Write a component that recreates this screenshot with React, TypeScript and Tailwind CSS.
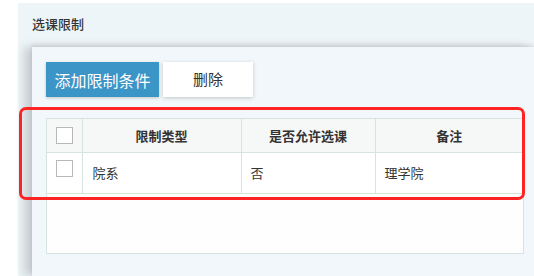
import React from "react";

const rows = [{ type: "院系", allow: "否", note: "理学院" }];

function Box() {
  return <span className="block h-[17px] w-[17px] border-[1.5px] border-[#b8b8b8] bg-white" />;
}

export default function App() {
  return (
    <div
      className="relative h-[276px] w-[534px] overflow-hidden bg-white text-[#333]"
      style={{ fontFamily: '"Noto Sans CJK SC", "Noto Sans", sans-serif' }}
    >
      <div className="ml-[18px] mt-[3px] flex h-[273px] flex-col bg-[#eef5f9]">
        <div className="flex h-[44px] items-center pl-[14px] pb-[2px] text-[13px] font-medium text-[#333]">
          选课限制
        </div>
        <div className="ml-[14px] flex-1 bg-[#f1f7fa] pl-[14px] pt-[15px] shadow-[-8px_0_9px_rgba(0,0,0,0.16),0_-2px_4px_rgba(0,0,0,0.1)]">
          <div className="flex gap-[4px]">
            <button
              type="button"
              className="h-[35px] w-[113px] bg-[#3c95c7] text-[16px] text-white shadow-[0_1px_3px_rgba(0,0,0,0.2)]"
            >
              添加限制条件
            </button>
            <button
              type="button"
              className="h-[35px] w-[90px] bg-white text-[15px] text-[#333] shadow-[0_1px_4px_rgba(0,0,0,0.2)]"
            >
              删除
            </button>
          </div>

          <div className="mt-[21px] h-[136px] w-[478px] border border-[#d6e4df] bg-[#fefefe]">
            <table className="w-full table-fixed border-collapse text-[13px]">
              <colgroup>
                <col className="w-[35px]" />
                <col className="w-[159px]" />
                <col className="w-[134px]" />
                <col />
              </colgroup>
              <thead>
                <tr className="h-[33px] bg-[#f6f8f7]">
                  <th className="border-b border-r border-[#d6e4df] p-0">
                    <div className="flex justify-center">
                      <Box />
                    </div>
                  </th>
                  <th className="border-b border-r border-[#d6e4df] font-bold">限制类型</th>
                  <th className="border-b border-r border-[#d6e4df] font-bold">是否允许选课</th>
                  <th className="border-b border-[#d6e4df] font-bold">备注</th>
                </tr>
              </thead>
              <tbody>
                {rows.map((r) => (
                  <tr key={r.type} className="h-[41px] bg-white">
                    <td className="border-b border-r border-[#d6e4df] p-0 align-top">
                      <div className="flex justify-center pt-[7px]">
                        <Box />
                      </div>
                    </td>
                    <td className="border-b border-r border-[#d6e4df] pl-[10px]">{r.type}</td>
                    <td className="border-b border-r border-[#d6e4df] pl-[9px]">{r.allow}</td>
                    <td className="border-b border-[#d6e4df] pl-[9px]">{r.note}</td>
                  </tr>
                ))}
              </tbody>
            </table>
          </div>
        </div>
      </div>

      <div className="pointer-events-none absolute left-[19px] top-[107px] h-[93px] w-[506px] rounded-[7px] border-[3.5px] border-[#ff2424]" />
    </div>
  );
}
